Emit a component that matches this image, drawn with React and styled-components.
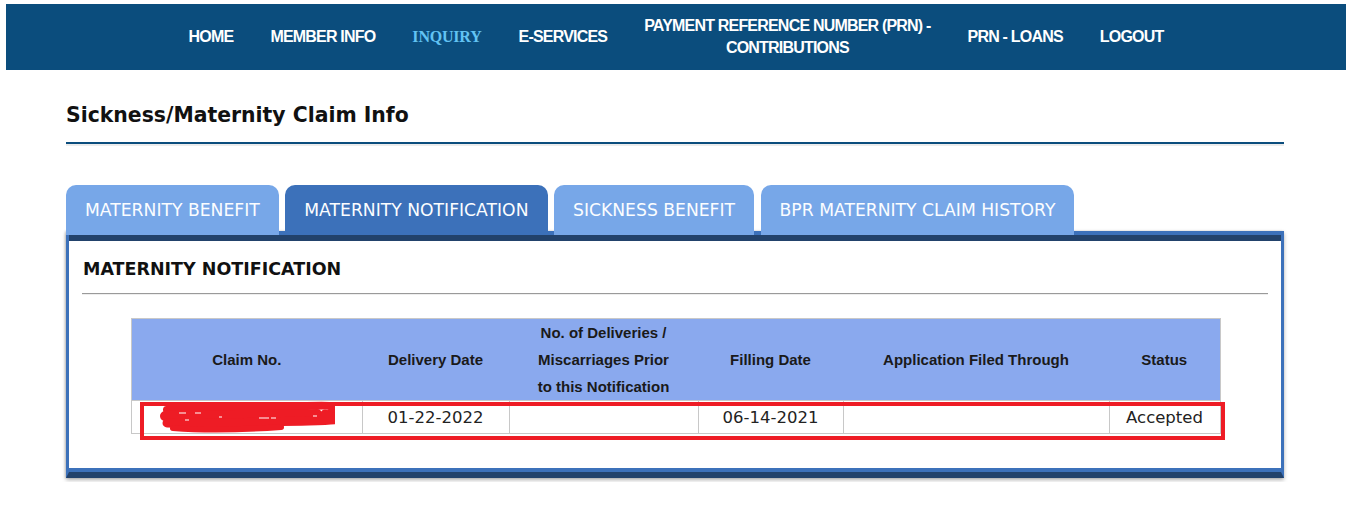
import React from 'react';
import styled, { createGlobalStyle } from 'styled-components';

const navItems = [
  { label: 'HOME' },
  { label: 'MEMBER INFO' },
  { label: 'INQUIRY', active: true },
  { label: 'E-SERVICES' },
  { label: ['PAYMENT REFERENCE NUMBER (PRN) -', 'CONTRIBUTIONS'] },
  { label: 'PRN - LOANS' },
  { label: 'LOGOUT' },
];

const tabs = [
  { label: 'MATERNITY BENEFIT' },
  { label: 'MATERNITY NOTIFICATION', active: true },
  { label: 'SICKNESS BENEFIT' },
  { label: 'BPR MATERNITY CLAIM HISTORY' },
];

const columns = [
  { title: 'Claim No.', width: 231 },
  { title: 'Delivery Date', width: 147 },
  { title: ['No. of Deliveries /', 'Miscarriages Prior', 'to this Notification'], width: 189 },
  { title: 'Filling Date', width: 145 },
  { title: 'Application Filed Through', width: 266 },
  { title: 'Status', width: 111 },
];

const Redacted = () => (
  <svg width="176" height="32" viewBox="0 0 176 32" style={{ display: 'block', margin: '0 auto' }}>
    <g fill="none" stroke="#ee1c25" strokeLinecap="round" strokeLinejoin="round">
      <path d="M8 9 C40 6, 100 7, 148 5 S172 9, 168 15 S152 20, 142 19" strokeWidth="8" />
      <path d="M6 15 C50 13, 110 15, 158 13" strokeWidth="10" />
      <path d="M8 22 C50 23, 100 21, 150 20 S170 17, 166 13" strokeWidth="9" />
      <path d="M14 27 C40 29, 80 29, 122 26" strokeWidth="6" />
    </g>
    <g stroke="#ffffff" strokeWidth="1.2">
      <path d="M20 12 h7 M36 12 h6 M60 16 h3 M100 17 h10 M112 17 h5" />
      <path d="M26 19 h4 M154 15 h4" />
    </g>
  </svg>
);

const App = () => (
  <>
    <GlobalStyle />
    <Page>
      <NavBar>
        {navItems.map((item, i) => (
          <NavItem key={i} $active={item.active}>
            {Array.isArray(item.label)
              ? item.label.map((line, j) => <div key={j}>{line}</div>)
              : item.label}
          </NavItem>
        ))}
      </NavBar>

      <Content>
        <PageTitle>Sickness/Maternity Claim Info</PageTitle>

        <TabRow>
          {tabs.map((tab) => (
            <Tab key={tab.label} $active={tab.active}>
              {tab.label}
            </Tab>
          ))}
        </TabRow>

        <Panel>
          <PanelBody>
            <SectionTitle>MATERNITY NOTIFICATION</SectionTitle>
            <Rule />
            <TableWrap>
              <Table>
                <colgroup>
                  {columns.map((c, i) => (
                    <col key={i} style={{ width: c.width }} />
                  ))}
                </colgroup>
                <thead>
                  <tr>
                    {columns.map((c, i) => (
                      <Th key={i}>
                        {Array.isArray(c.title)
                          ? c.title.map((line, j) => <div key={j}>{line}</div>)
                          : c.title}
                      </Th>
                    ))}
                  </tr>
                </thead>
                <tbody>
                  <tr>
                    <Td>
                      <Redacted />
                    </Td>
                    <Td>01-22-2022</Td>
                    <Td />
                    <Td>06-14-2021</Td>
                    <Td />
                    <Td>Accepted</Td>
                  </tr>
                </tbody>
              </Table>
              <Highlight />
            </TableWrap>
          </PanelBody>
        </Panel>
      </Content>
    </Page>
  </>
);

const GlobalStyle = createGlobalStyle`
  body {
    margin: 0;
    background: #fff;
    font-family: "DejaVu Sans", Verdana, sans-serif;
  }
`;

const Page = styled.div`
  padding: 4px 6px;
`;

const NavBar = styled.nav`
  height: 66px;
  background: #0b4d7d;
  display: flex;
  justify-content: center;
  align-items: center;
`;

const NavItem = styled.div`
  padding: 0 18.5px;
  text-align: center;
  font-family: ${(p) => (p.$active ? '"Liberation Serif", serif' : '"Liberation Sans", Arial, sans-serif')};
  font-weight: bold;
  font-size: 16px;
  line-height: 22px;
  letter-spacing: ${(p) => (p.$active ? '-0.2px' : '-0.8px')};
  color: ${(p) => (p.$active ? '#62c3f3' : '#ffffff')};
`;

const Content = styled.div`
  padding: 0 62px 0 60px;
`;

const PageTitle = styled.h1`
  margin: 33px 0 0;
  padding-bottom: 15px;
  font-family: "DejaVu Sans", Verdana, sans-serif;
  font-size: 20.4px;
  line-height: 24px;
  font-weight: bold;
  color: #111;
  border-bottom: 2px solid #0b4d7d;
  box-shadow: 0 2px 0 #ececec;
`;

const TabRow = styled.div`
  display: flex;
  gap: 6.5px;
  margin-top: 41px;
  position: relative;
  z-index: 1;
  margin-bottom: -4px;
`;

const Tab = styled.div`
  height: 50px;
  padding: 0 19px;
  display: flex;
  align-items: center;
  border-radius: 10px 10px 0 0;
  background: ${(p) => (p.$active ? '#3c71ba' : '#77a7e8')};
  color: #fbfdff;
  font-family: "DejaVu Sans", Verdana, sans-serif;
  font-size: 17.2px;
  white-space: nowrap;
`;

const Panel = styled.div`
  border: 3px solid #3c71ba;
  border-top-width: 4px;
  border-bottom: 6px solid #22426b;
  box-shadow: 0 2px 4px rgba(0, 0, 0, 0.3), -1px 0 2px rgba(0, 0, 0, 0.15);
`;

const PanelBody = styled.div`
  border-top: 6px solid #22426b;
  border-bottom: 4px solid #3c71ba;
  padding: 17px 13px 34px;
  background: #fff;
`;

const SectionTitle = styled.h2`
  margin: 0;
  padding-left: 1px;
  font-family: "DejaVu Sans", Verdana, sans-serif;
  font-size: 17.5px;
  line-height: 22px;
  font-weight: bold;
  color: #111;
`;

const Rule = styled.hr`
  margin: 13px 0 23px;
  border: 0;
  border-top: 1px solid #9a9a9a;
  border-bottom: 1px solid #eeeeee;
`;

const TableWrap = styled.div`
  position: relative;
  width: 1089px;
  margin: 0 auto;
`;

const Table = styled.table`
  width: 100%;
  border-collapse: collapse;
  table-layout: fixed;
  border: 1px solid #c8c8c8;
`;

const Th = styled.th`
  background: #8aa9ee;
  padding: 0;
  height: 81px;
  font-family: "Liberation Sans", Arial, sans-serif;
  font-size: 15px;
  line-height: 27px;
  font-weight: bold;
  color: #1a1a1a;
  text-align: center;
  vertical-align: middle;
`;

const Td = styled.td`
  height: 32px;
  padding: 0;
  border: 1px solid #c8c8c8;
  font-family: "DejaVu Sans", Verdana, sans-serif;
  font-size: 16.5px;
  color: #222;
  text-align: center;
  vertical-align: middle;
`;

const Highlight = styled.div`
  position: absolute;
  left: 9px;
  right: -5px;
  top: 84px;
  height: 38px;
  border: 4px solid #ee1c25;
  box-sizing: border-box;
  pointer-events: none;
`;

export default App;
